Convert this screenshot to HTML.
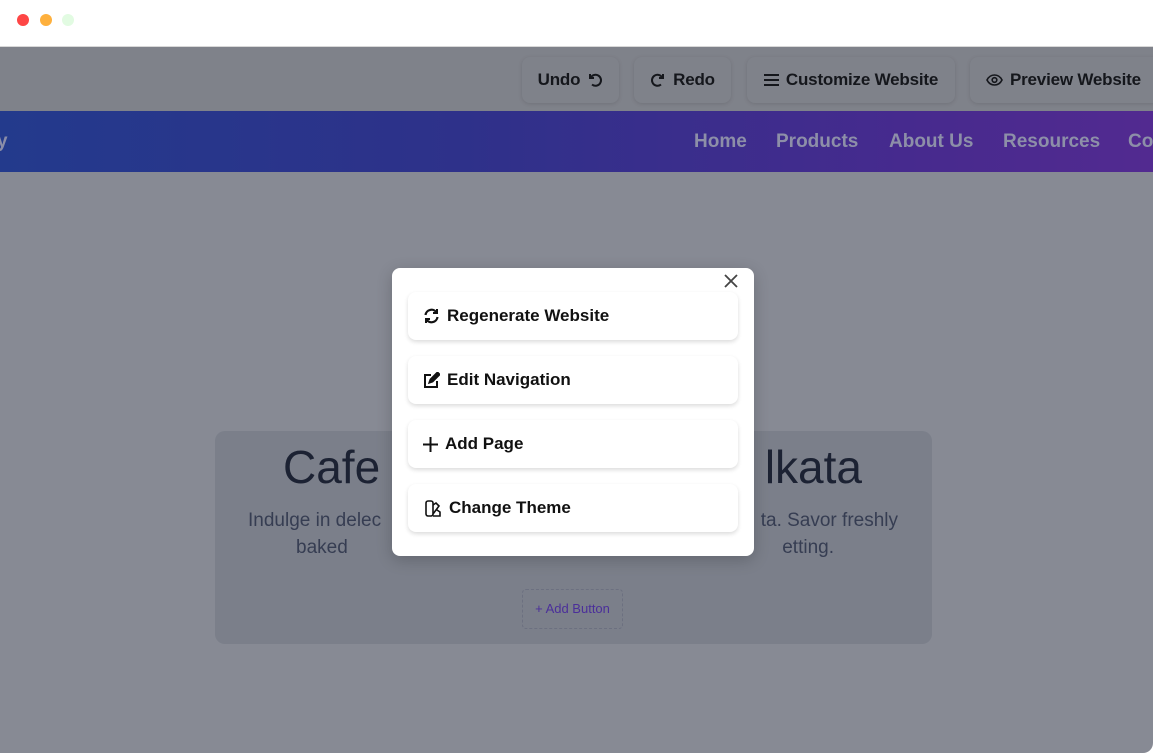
<!DOCTYPE html>
<html><head><meta charset="utf-8"><style>
*{box-sizing:border-box;margin:0;padding:0}
body{width:1153px;height:756px;background:#fff;font-family:"Liberation Sans",sans-serif;position:relative;overflow:hidden}
.dot{position:absolute;top:14px;width:12px;height:12px;border-radius:50%}
.frame{position:absolute;left:0;top:46px;width:1153px;height:707px;background:#878a94;border-bottom-right-radius:10px;overflow:hidden;border-top:1px solid #d8d8d8}
.tb{position:absolute;left:0;top:0;width:100%;height:64px;background:#7f828a}
.btn{position:absolute;top:10px;height:46px;border-radius:8px;background:#7f828a;box-shadow:0 1px 4px rgba(0,0,0,.12);font-size:17px;font-weight:bold;color:#15171c;display:flex;align-items:center;justify-content:center;gap:7px;letter-spacing:-.2px}
.nav{position:absolute;left:0;top:64px;width:100%;height:61px;background:linear-gradient(90deg,#233a8c,#2e318a 40%,#472a8e 80%,#522a90)}
.nav span{position:absolute;top:20px;font-size:19px;font-weight:bold;color:#8d8fa8}
.card{position:absolute;left:215px;top:384px;width:717px;height:213px;background:#7b7f8a;border-radius:10px}
.card span{position:absolute;white-space:nowrap}
.t{font-size:46px;color:#1c2233;top:9px}
.p{font-size:19px;color:#363d52}
.addb{position:absolute;left:307px;top:158px;width:101px;height:40px;border:1px dashed #6c7080;border-radius:4px;font-size:13px;color:#4b2f9a;line-height:38px;text-align:center}
.modal{position:absolute;left:392px;top:268px;width:362px;height:288px;background:#fff;border-radius:8px;box-shadow:0 4px 16px rgba(0,0,0,.2)}
.item{position:absolute;left:16px;width:330px;height:48px;background:#fff;border-radius:8px;box-shadow:0 2px 4px rgba(0,0,0,.14);display:flex;align-items:center;padding-left:15px;gap:7px;font-size:17px;font-weight:bold;color:#111}
</style></head><body>
<div class="dot" style="left:17px;background:#fe4645"></div>
<div class="dot" style="left:40px;background:#feb03d"></div>
<div class="dot" style="left:62px;background:#e2fbe2"></div>
<div class="frame">
<div class="tb"></div>
<div class="btn" style="left:522px;width:97px">Undo <svg width="16" height="16" viewBox="0 0 16 16" fill="none" stroke="#15171c" stroke-width="2"><path d="M3 2v4h4M3.5 6A5.5 5.5 0 1 1 5 12.5"/></svg></div>
<div class="btn" style="left:634px;width:97px"><svg width="16" height="16" viewBox="0 0 16 16" fill="none" stroke="#15171c" stroke-width="2"><path d="M13 2v4H9M12.5 6A5.5 5.5 0 1 0 11 12.5"/></svg>Redo</div>
<div class="btn" style="left:747px;width:208px"><svg width="15" height="14" viewBox="0 0 15 14" stroke="#15171c" stroke-width="2"><path d="M0 2h15M0 7h15M0 12h15"/></svg>Customize Website</div>
<div class="btn" style="left:970px;width:190px;justify-content:flex-start;padding-left:16px"><svg width="17" height="12" viewBox="0 0 17 12" fill="none" stroke="#15171c" stroke-width="1.6"><path d="M1 6C3 2 6 1 8.5 1S14 2 16 6C14 10 11 11 8.5 11S3 10 1 6z"/><circle cx="8.5" cy="6" r="2.3"/></svg>Preview Website</div>
<div class="nav"><span style="left:-3px;color:#8a8da8">y</span><span style="left:694px">Home</span><span style="left:776px">Products</span><span style="left:889px">About Us</span><span style="left:1003px">Resources</span><span style="left:1128px">Co</span></div>
<div class="card">
<span class="t" style="left:68px">Cafe</span>
<span class="t" style="right:70px">lkata</span>
<span class="p" style="left:33px;top:79px">Indulge in delec</span>
<span class="p" style="right:34px;top:79px">ta. Savor freshly</span>
<span class="p" style="left:81px;top:106px">baked</span>
<span class="p" style="right:98px;top:106px">etting.</span>
<div class="addb">+ Add Button</div></div>
</div>
<div class="modal">
<svg style="position:absolute;left:332px;top:6px" width="14" height="14" viewBox="0 0 14 14" stroke="#444" stroke-width="1.8"><path d="M1 1l12 12M13 1L1 13"/></svg>
<div class="item" style="top:24px"><svg width="17" height="16" viewBox="0 0 17 16" fill="none" stroke="#111" stroke-width="2.2"><path d="M2.5 7A6 6 0 0 1 13.5 4.5M14.5 9A6 6 0 0 1 3.5 11.5"/><path d="M14 1v4h-4M3 15v-4h4" stroke-width="2"/></svg>Regenerate Website</div>
<div class="item" style="top:88px"><svg width="17" height="17" viewBox="0 0 17 17" fill="none" stroke="#111" stroke-width="2"><path d="M8 3H2v12h12V9"/><path d="M6.5 10.5l1-3 7-7 2 2-7 7z" fill="#111"/></svg>Edit Navigation</div>
<div class="item" style="top:152px"><svg width="15" height="15" viewBox="0 0 15 15" stroke="#111" stroke-width="2"><path d="M7.5 0v15M0 7.5h15"/></svg>Add Page</div>
<div class="item" style="top:216px;padding-left:17px"><svg width="17" height="17" viewBox="0 0 17 17" fill="none" stroke="#111" stroke-width="1.6"><rect x="1" y="1" width="7" height="15" rx="2"/><path d="M8 5l3-2 3 3-6 8M8 16h7v-4l-3-2"/></svg>Change Theme</div>
</div>
</body></html>
